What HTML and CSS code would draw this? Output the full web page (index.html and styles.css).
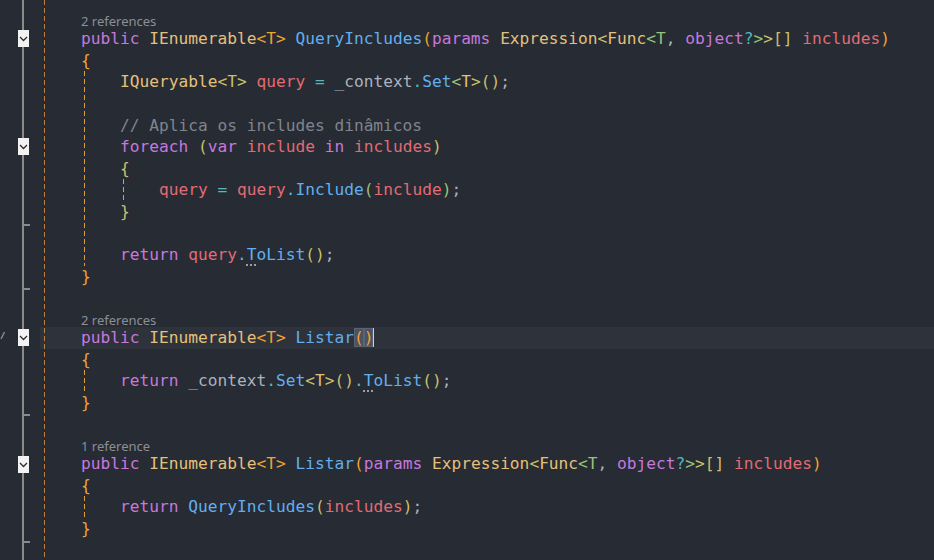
FILE: index.html
```html
<!DOCTYPE html>
<html lang="pt-BR">
<head>
    <meta charset="UTF-8">
    <title>Repositorio.cs</title>
    <link rel="stylesheet" href="styles.css">
</head>
<body>
    <div class="editor">
        <div class="lens">2 references</div>
        <div class="row">
            <div class="margin"><svg class="fold" width="11" height="17" viewBox="0 0 11 17"><rect width="11" height="17" fill="#f2f2f2"/><path d="M2 7 L5.5 10.5 L9 7" fill="none" stroke="#2b2b2b" stroke-width="1.3"/></svg></div>
            <div class="code"><span class="k">public</span> <span class="t">IEnumerable</span><span class="b1">&lt;T&gt;</span> <span class="m">QueryIncludes</span><span class="b1">(</span><span class="k">params</span> <span class="t">Expression</span><span class="b2">&lt;</span><span class="t">Func</span><span class="b3">&lt;T</span>, <span class="k">object</span><span class="o">?</span><span class="b3">&gt;</span><span class="b2">&gt;[]</span> <span class="v">includes</span><span class="b1">)</span></div>
        </div>
        <div class="row"><div class="margin"></div><div class="code"><span class="b1">{</span></div></div>
        <div class="body">
            <div class="row"><div class="margin"></div><div class="code">    <span class="t">IQueryable</span><span class="b2">&lt;T&gt;</span> <span class="v">query</span> <span class="o">=</span> _context<span class="o">.</span><span class="m">Set</span><span class="b3">&lt;</span><span class="t">T</span><span class="b2">&gt;()</span>;</div></div>
            <div class="row"><div class="margin"></div><div class="code"></div></div>
            <div class="row"><div class="margin"></div><div class="code">    <span class="c">// Aplica os includes dinâmicos</span></div></div>
            <div class="row">
                <div class="margin"><svg class="fold" width="11" height="17" viewBox="0 0 11 17"><rect width="11" height="17" fill="#f2f2f2"/><path d="M2 7 L5.5 10.5 L9 7" fill="none" stroke="#2b2b2b" stroke-width="1.3"/></svg></div>
                <div class="code">    <span class="k">foreach</span> <span class="b2">(</span><span class="k">var</span> <span class="v">include</span> <span class="k">in</span> <span class="v">includes</span><span class="b2">)</span></div>
            </div>
            <div class="row"><div class="margin"></div><div class="code">    <span class="b2">{</span></div></div>
            <div class="inner">
                <div class="row"><div class="margin"></div><div class="code">        <span class="v">query</span> <span class="o">=</span> <span class="v">query</span><span class="o">.</span><span class="m">Include</span><span class="b3">(</span><span class="v">include</span><span class="b3">)</span>;</div></div>
            </div>
            <div class="row"><div class="margin"></div><div class="code">    <span class="b2">}</span></div></div>
            <div class="row"><div class="margin tick"></div><div class="code"></div></div>
            <div class="row"><div class="margin"></div><div class="code">    <span class="k">return</span> <span class="v">query</span><span class="o">.</span><span class="m"><span class="hint">T</span>oList</span><span class="b2">()</span>;</div></div>
        </div>
        <div class="row"><div class="margin"></div><div class="code"><span class="b1">}</span></div></div>
        <div class="row"><div class="margin tick"></div><div class="code"></div></div>

        <div class="lens">2 references</div>
        <div class="row">
            <div class="margin"><svg class="edit" width="6" height="9" viewBox="0 0 6 9"><path d="M1 8 L4.5 1" stroke="#8a8d94" stroke-width="1.4"/></svg><svg class="fold near" width="11" height="17" viewBox="0 0 11 17"><rect width="11" height="17" fill="#f2f2f2"/><path d="M2 7 L5.5 10.5 L9 7" fill="none" stroke="#2b2b2b" stroke-width="1.3"/></svg></div>
            <div class="code current"><span class="k">public</span> <span class="t">IEnumerable</span><span class="b1">&lt;T&gt;</span> <span class="m">Listar</span><span class="b1 match">(</span><span class="b1 match caret">)</span></div>
        </div>
        <div class="row"><div class="margin"></div><div class="code"><span class="b1">{</span></div></div>
        <div class="body">
            <div class="row"><div class="margin"></div><div class="code">    <span class="k">return</span> _context<span class="o">.</span><span class="m">Set</span><span class="b2">&lt;</span><span class="t">T</span><span class="b2">&gt;()</span><span class="o">.</span><span class="m"><span class="hint">T</span>oList</span><span class="b2">()</span>;</div></div>
        </div>
        <div class="row"><div class="margin"></div><div class="code"><span class="b1">}</span></div></div>
        <div class="row"><div class="margin tick"></div><div class="code"></div></div>

        <div class="lens">1 reference</div>
        <div class="row">
            <div class="margin"><svg class="fold" width="11" height="17" viewBox="0 0 11 17"><rect width="11" height="17" fill="#f2f2f2"/><path d="M2 7 L5.5 10.5 L9 7" fill="none" stroke="#2b2b2b" stroke-width="1.3"/></svg></div>
            <div class="code"><span class="k">public</span> <span class="t">IEnumerable</span><span class="b1">&lt;T&gt;</span> <span class="m">Listar</span><span class="b1">(</span><span class="k">params</span> <span class="t">Expression</span><span class="b2">&lt;</span><span class="t">Func</span><span class="b3">&lt;T</span>, <span class="k">object</span><span class="o">?</span><span class="b3">&gt;</span><span class="b2">&gt;[]</span> <span class="v">includes</span><span class="b1">)</span></div>
        </div>
        <div class="row"><div class="margin"></div><div class="code"><span class="b1">{</span></div></div>
        <div class="body">
            <div class="row"><div class="margin"></div><div class="code">    <span class="k">return</span> <span class="m">QueryIncludes</span><span class="b2">(</span><span class="v">includes</span><span class="b2">)</span>;</div></div>
        </div>
        <div class="row"><div class="margin"></div><div class="code"><span class="b1">}</span></div></div>
        <div class="row"><div class="margin tick"></div><div class="code"></div></div>
    </div>
</body>
</html>
```

FILE: styles.css
```css
body {
    margin: 0;
    background: #272b33;
}

.editor {
    width: 934px;
    height: 560px;
    overflow: hidden;
    box-sizing: border-box;
    padding-top: 10px;
    background-color: #272b33;
    /* linha da margem + guia de indentação da classe */
    background-image:
        linear-gradient(#8a8a8a, #8a8a8a),
        repeating-linear-gradient(to bottom, #b97f3e 0 5px, transparent 5px 8px);
    background-position: 22px 0, 44px 0;
    background-size: 2px 100%, 1px 100%;
    background-repeat: no-repeat;
    font-family: "DejaVu Sans Mono", monospace;
    font-size: 16.2px;
}

.row {
    display: flex;
    height: 21.6px;
}

.margin {
    width: 40px;
    flex: none;
    display: flex;
    align-items: center;
}

.fold {
    display: block;
    margin-left: 18px;
}

.fold.near {
    margin-left: 12px;
}

.edit {
    display: block;
    margin-bottom: 4px;
}

.tick {
    background: linear-gradient(#8a8a8a, #8a8a8a) 24px 1px / 6px 2px no-repeat;
}

.code {
    flex: 1;
    padding-left: 41px;
    line-height: 21.6px;
    white-space: pre;
    color: #abb2bf;
}

.code.current {
    background: rgba(255, 255, 255, 0.035);
}

.lens {
    height: 18.2px;
    box-sizing: border-box;
    padding: 2px 0 0 81px;
    line-height: 18px;
    font-family: "Noto Sans", sans-serif;
    font-size: 13px;
    color: #8b8f97;
}

.body {
    background: repeating-linear-gradient(to bottom, #dc9d3c 0 5px, transparent 5px 8px) 84px 0 / 1px 100% no-repeat;
}

.inner {
    background: repeating-linear-gradient(to bottom, #b3b063 0 5px, transparent 5px 8px) 123px 0 / 1px 100% no-repeat;
}

/* cores da sintaxe */
.k { color: #c678dd; }
.t { color: #e5c07b; }
.m { color: #61afef; }
.v { color: #e06c75; }
.o { color: #56b6c2; }
.c { color: #7f848e; }
.b1 { color: #f0a232; }
.b2 { color: #c9c06a; }
.b3 { color: #98c379; }

.match {
    background: #4b5263;
    box-shadow: inset 0 0 0 1px #5a6273;
}

.caret {
    border-right: 1.5px solid #d0d0d0;
}

.hint {
    text-decoration: underline dotted #9a9ea6;
    text-decoration-thickness: 2px;
    text-underline-offset: 4px;
}
```
